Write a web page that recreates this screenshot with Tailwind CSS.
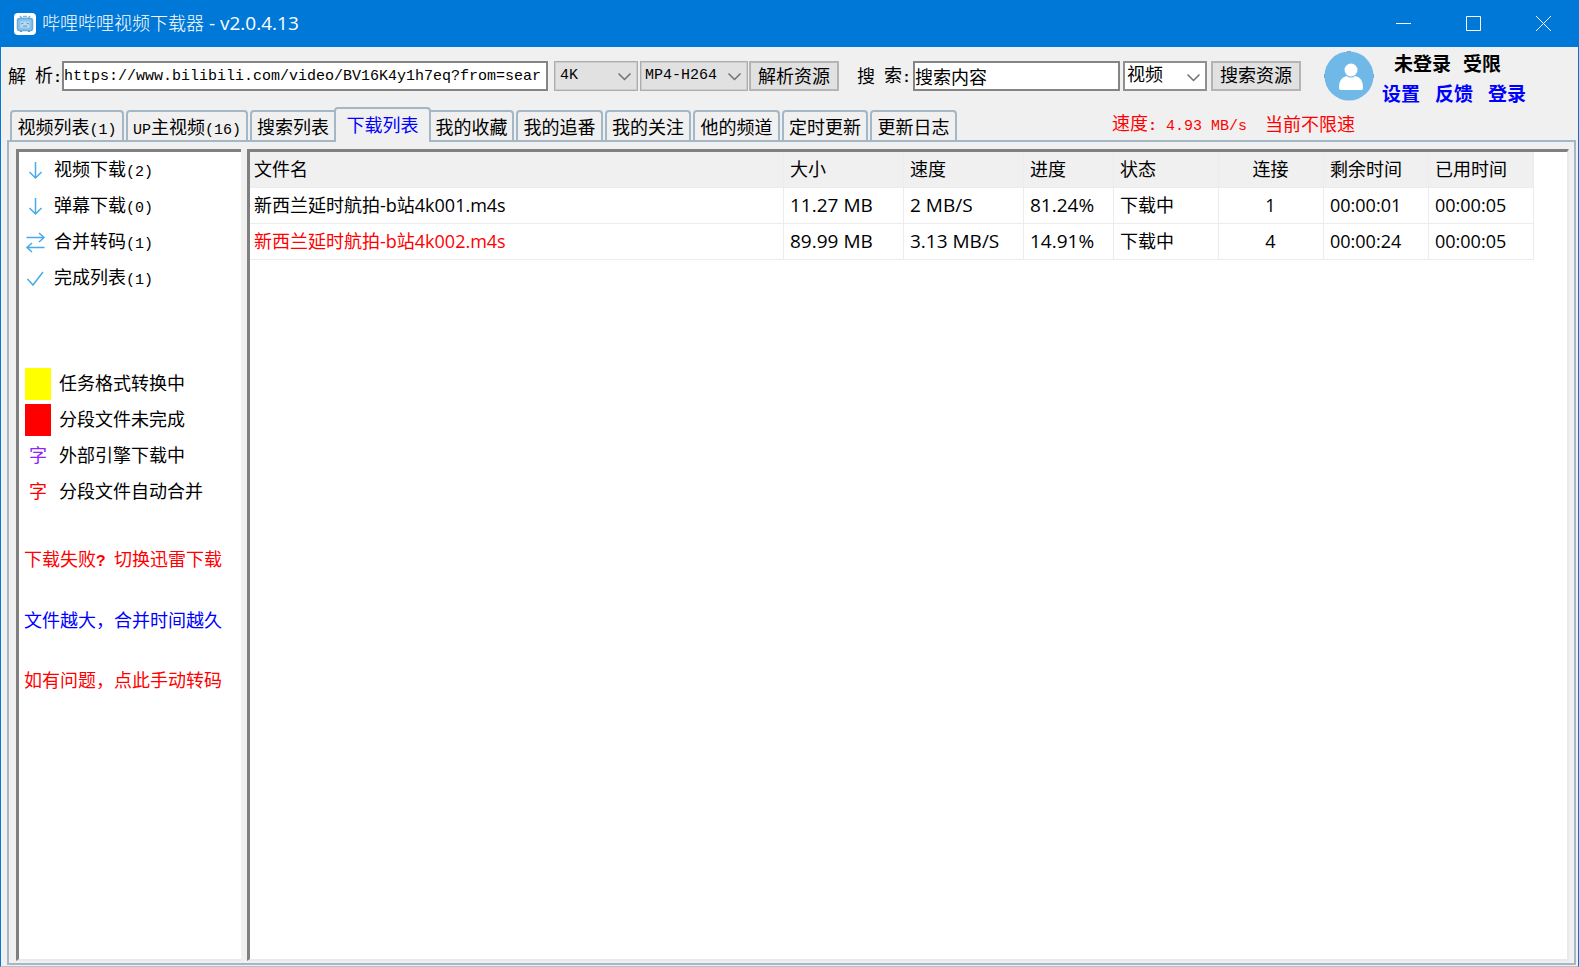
<!DOCTYPE html>
<html lang="zh-CN">
<head>
<meta charset="utf-8">
<title>哔哩哔哩视频下载器 - v2.0.4.13</title>
<script src="https://cdn.jsdelivr.net/npm/@tailwindcss/browser@4"></script>
</head>
<body class="flex h-screen flex-col overflow-hidden border-x border-b border-x-[#0078d7] border-b-[#b9bec2] bg-[#f0f0f0] font-['Liberation_Mono','Noto_Sans_CJK_SC',monospace] text-[18px] leading-6 text-black">

<header class="flex h-[47px] shrink-0 items-center bg-[#0078d7] pl-[13px] text-white">
  <svg class="size-[22px]" viewBox="0 0 22 22" fill="none" aria-hidden="true">
    <rect width="22" height="22" rx="4" fill="#fff"/>
    <path d="M6 3l2.500 3M16 3l-2.500 3M9 3.500h4" stroke="#78b5e2" stroke-width="1.500"/>
    <rect x="3.500" y="5.500" width="15" height="12" rx="2" fill="#8cc3e9" stroke="#6aaade" stroke-width="1.500"/>
    <path d="M6.500 8.500h9v6h-9z" fill="#b9dcf3"/>
    <path d="M7 11l2.500-1M15 11l-2.500-1M9 13.500l1-.8 1 .8 1-.8 1 .8M6 18.500h2M14 18.500h2" stroke="#4d96d0"/>
  </svg>
  <h1 class="ml-[6px] flex-1 whitespace-pre pb-[2px] font-['Noto_Sans_CJK_SC',sans-serif] text-[18px] font-light"><span>哔哩哔哩视频下载器</span><span class="font-['Open_Sans',sans-serif] text-[19px] font-normal"> - v2.0.4.13</span></h1>
  <div class="flex h-full">
    <button class="flex w-[70px] items-center justify-center" aria-label="最小化"><svg class="size-[15px]" viewBox="0 0 15 15" stroke="#fff"><path d="M0 7.500h15"/></svg></button>
    <button class="flex w-[70px] items-center justify-center" aria-label="最大化"><svg class="size-[15px]" viewBox="0 0 15 15" stroke="#fff" fill="none"><path d="M.5 .5h14v14H.5z"/></svg></button>
    <button class="flex w-[70px] items-center justify-center" aria-label="关闭"><svg class="size-[15px]" viewBox="0 0 15 15" stroke="#fff"><path d="M0 0l15 15M15 0L0 15"/></svg></button>
  </div>
</header>

<div class="flex h-[58px] shrink-0 items-center pl-[7px] pr-[52px]">
  <label for="url" class="flex w-[54px] items-center gap-[9px] pt-[3px]"><span>解</span><span>析<span class="text-[15px] font-bold">:</span></span></label>
  <input id="url" type="text" value="https://www.bilibili.com/video/BV16K4y1h7eq?from=sear" class="h-[30px] min-w-0 flex-1 border-2 border-[#858585] bg-white text-[15px]">
  <div class="relative ml-[6px] w-[84px]">
    <select aria-label="清晰度" class="block h-[30px] w-full appearance-none border border-[#adadad] bg-[#e1e1e1] pl-[5px] text-[15px] outline outline-offset-[-2px] outline-[#cccccc]"><option>4K</option></select>
    <svg class="pointer-events-none absolute right-[7px] top-[11px] h-[9px] w-[13px]" viewBox="0 0 13 9" fill="none" stroke="#707070" stroke-width="1.500"><path d="M.5 1.500l6 6 6-6"/></svg>
  </div>
  <div class="relative ml-[2px] w-[108px]">
    <select aria-label="视频编码" class="block h-[30px] w-full appearance-none border border-[#adadad] bg-[#e1e1e1] pl-[4px] text-[15px] outline outline-offset-[-2px] outline-[#cccccc]"><option>MP4-H264</option></select>
    <svg class="pointer-events-none absolute right-[7px] top-[11px] h-[9px] w-[13px]" viewBox="0 0 13 9" fill="none" stroke="#707070" stroke-width="1.500"><path d="M.5 1.500l6 6 6-6"/></svg>
  </div>
  <button class="ml-[1px] h-[30px] w-[90px] border-2 border-[#b4b4b4] bg-[#e1e1e1] pt-[3px]">解析资源</button>
  <label for="keyword" class="ml-[18px] flex w-[56px] items-center gap-[9px] pt-[3px]"><span>搜</span><span>索<span class="text-[15px] font-bold">:</span></span></label>
  <input id="keyword" type="text" value="搜索内容" class="h-[30px] w-[207px] border-2 border-[#858585] bg-white">
  <div class="relative ml-[3px] w-[84px]">
    <select aria-label="搜索类型" class="block h-[30px] w-full appearance-none border-2 border-[#8f8f8f] bg-white pl-[2px]"><option>视频</option></select>
    <svg class="pointer-events-none absolute right-[7px] top-[12px] h-[9px] w-[13px]" viewBox="0 0 13 9" fill="none" stroke="#707070" stroke-width="1.500"><path d="M.5 1.500l6 6 6-6"/></svg>
  </div>
  <button class="ml-[4px] h-[30px] w-[90px] border-2 border-[#b4b4b4] bg-[#e1e1e1] pt-[2px]">搜索资源</button>
  <svg class="ml-[23px] size-[50px]" viewBox="0 0 50 50" role="img" aria-label="头像">
    <path d="M23 0h4v3h-4zM0 23h3v4H0zM47 23h3v4h-3z" fill="#8c9aa5"/>
    <circle cx="25" cy="25" r="24.500" fill="#6fb8e8"/>
    <circle cx="27" cy="19" r="6.500" fill="#fff"/>
    <path d="M15 37c0-8 3-11 8-12 2 2 6 2 8 0 5 1 8 4 8 12 0 1.500-1 2-2 2H17c-1 0-2-.5-2-2z" fill="#fff"/>
  </svg>
  <div class="ml-[8px] flex flex-col pt-[10px] text-[19px] font-bold leading-[30px]">
    <p class="flex gap-[12px] pl-[12px]"><span>未登录</span><span>受限</span></p>
    <nav class="flex gap-[15px] text-[#0000ff]"><a href="#settings">设置</a><a href="#feedback">反馈</a><a href="#login">登录</a></nav>
  </div>
</div>

<div class="flex h-[35px] shrink-0 items-end pl-[9px]">
  <div role="tablist" class="flex items-end gap-[2px] leading-[30px] *:pt-[2px]">
    <button role="tab" class="h-[30px] w-[114px] rounded-t-sm border-2 border-b-0 border-[#a3b7c6]">视频列表<span class="text-[15px]">(1)</span></button>
    <button role="tab" class="h-[30px] w-[122px] rounded-t-sm border-2 border-b-0 border-[#a3b7c6]"><span class="text-[15px]">UP</span>主视频<span class="text-[15px]">(16)</span></button>
    <button role="tab" class="h-[30px] w-[84px] rounded-tl-sm border-l-2 border-t-2 border-[#a3b7c6]">搜索列表</button>
    <button role="tab" aria-selected="true" class="relative z-10 -mx-[2px] -mb-[2px] h-[35px] w-[97px] rounded-t-sm border-2 border-b-0 border-[#a3b7c6] bg-[#f0f0f0] text-[#0000ff]">下载列表</button>
    <button role="tab" class="h-[30px] w-[83px] rounded-tr-sm border-r-2 border-t-2 border-[#a3b7c6]">我的收藏</button>
    <button role="tab" class="h-[30px] w-[87px] rounded-t-sm border-2 border-b-0 border-[#a3b7c6]">我的追番</button>
    <button role="tab" class="h-[30px] w-[86px] rounded-t-sm border-2 border-b-0 border-[#a3b7c6]">我的关注</button>
    <button role="tab" class="h-[30px] w-[87px] rounded-t-sm border-2 border-b-0 border-[#a3b7c6]">他的频道</button>
    <button role="tab" class="h-[30px] w-[86px] rounded-t-sm border-2 border-b-0 border-[#a3b7c6]">定时更新</button>
    <button role="tab" class="h-[30px] w-[87px] rounded-t-sm border-2 border-b-0 border-[#a3b7c6]">更新日志</button>
  </div>
  <p class="ml-auto mr-[223px] flex items-center gap-[18px] pb-[1px] text-[#ff0000]"><span class="whitespace-pre">速度<span class="text-[15px]"><b>:</b> 4.93 MB/s</span></span><span>当前不限速</span></p>
</div>

<main class="ml-[6px] mr-[2px] mb-[1px] flex min-h-0 flex-1 gap-[6px] border-2 border-[#a3b7c6] p-[7px] pb-[2px] pr-[5px]">
  <aside class="w-[225px] shrink-0 border-b-2 border-l-[3px] border-t-[3px] border-b-[#e9e9e9] border-l-[#808080] border-t-[#808080] bg-white">
    <ul class="pl-[7px] leading-8">
      <li><a href="#video" class="flex h-9 items-center gap-[9px]"><svg class="size-[19px]" viewBox="0 0 19 19" fill="none" stroke="#49a9ea" stroke-width="1.500"><path d="M9.500 1v16M3.500 11l6 6 6-6"/></svg><span class="pt-[3px]">视频下载<span class="text-[15px]">(2)</span></span></a></li>
      <li><a href="#danmaku" class="flex h-9 items-center gap-[9px]"><svg class="size-[19px]" viewBox="0 0 19 19" fill="none" stroke="#49a9ea" stroke-width="1.500"><path d="M9.500 1v16M3.500 11l6 6 6-6"/></svg><span class="pt-[3px]">弹幕下载<span class="text-[15px]">(0)</span></span></a></li>
      <li><a href="#merge" class="flex h-9 items-center gap-[9px]"><svg class="size-[19px] overflow-visible" viewBox="0 0 19 19" fill="none" stroke="#49a9ea" stroke-width="1.500"><path d="M.5 4.500h17.500M13 0l5 4.500-5 4.500M18.500 14.500H1M6 10l-5 4.500 5 4.500"/></svg><span class="pt-[3px]">合并转码<span class="text-[15px]">(1)</span></span></a></li>
      <li><a href="#done" class="flex h-9 items-center gap-[9px]"><svg class="size-[19px]" viewBox="0 0 19 19" fill="none" stroke="#49a9ea" stroke-width="1.500"><path d="M1.500 10l5.500 6L17 3"/></svg><span class="pt-[3px]">完成列表<span class="text-[15px]">(1)</span></span></a></li>
    </ul>
    <ul class="mt-[72px] flex flex-col gap-[4px] pl-[6px] leading-[34px]">
      <li class="flex h-8 gap-[8px]"><span class="h-8 w-[26px] bg-[#ffff00]"></span>任务格式转换中</li>
      <li class="flex h-8 gap-[8px]"><span class="h-8 w-[26px] bg-[#ff0000]"></span>分段文件未完成</li>
      <li class="flex h-8 gap-[8px]"><span class="w-[26px] text-center text-[#8b22ff]">字</span>外部引擎下载中</li>
      <li class="flex h-8 gap-[8px]"><span class="w-[26px] text-center text-[#ff0000]">字</span>分段文件自动合并</li>
    </ul>
    <div class="mt-[41px] flex flex-col gap-[36px] whitespace-nowrap pl-[5px]">
      <a href="#xunlei" class="text-[#ff0000]">下载失败<span class="inline-block w-[18px] text-[16px] font-bold">?</span>切换迅雷下载</a>
      <p class="text-[#0000ff]">文件越大，合并时间越久</p>
      <a href="#transcode" class="text-[#ff0000]">如有问题，点此手动转码</a>
    </div>
  </aside>

  <section class="min-w-0 flex-1 border-2 border-l-[3px] border-t-[3px] border-b-[#e9e9e9] border-l-[#808080] border-r-[#e9e9e9] border-t-[#808080] bg-white pr-[33px] font-['Open_Sans','Noto_Sans_CJK_SC',sans-serif] leading-[30px]">
    <table class="w-full table-fixed border-separate border-spacing-0 text-left">
      <colgroup><col><col class="w-[120px]"><col class="w-[120px]"><col class="w-[90px]"><col class="w-[105px]"><col class="w-[105px]"><col class="w-[105px]"><col class="w-[105px]"></colgroup>
      <thead class="bg-[#f0f0f0]">
        <tr class="h-9 *:border-b *:border-r *:border-[#ececec] *:p-0 *:pb-[2px] *:pl-[6px] *:font-normal *:first:pl-[4px]">
          <th>文件名</th><th>大小</th><th>速度</th><th>进度</th><th>状态</th><th class="pr-[7px]! text-center">连接</th><th>剩余时间</th><th>已用时间</th>
        </tr>
      </thead>
      <tbody>
        <tr class="h-9 *:border-b *:border-r *:border-[#ececec] *:p-0 *:pb-[2px] *:pl-[6px] *:first:pl-[4px]">
          <td>新西兰延时航拍-b站4k001.m4s</td><td class="text-[19px]">11.27 MB</td><td class="text-[19px]">2 MB/S</td><td class="text-[19px]">81.24%</td><td>下载中</td><td class="pr-[7px]! text-center">1</td><td>00:00:01</td><td>00:00:05</td>
        </tr>
        <tr class="h-9 *:border-b *:border-r *:border-[#ececec] *:p-0 *:pb-[2px] *:pl-[6px] *:first:pl-[4px]">
          <td class="text-[#ff0000]">新西兰延时航拍-b站4k002.m4s</td><td class="text-[19px]">89.99 MB</td><td class="text-[19px]">3.13 MB/S</td><td class="text-[19px]">14.91%</td><td>下载中</td><td class="pr-[7px]! text-center">4</td><td>00:00:24</td><td>00:00:05</td>
        </tr>
      </tbody>
    </table>
  </section>
</main>
</body>
</html>
